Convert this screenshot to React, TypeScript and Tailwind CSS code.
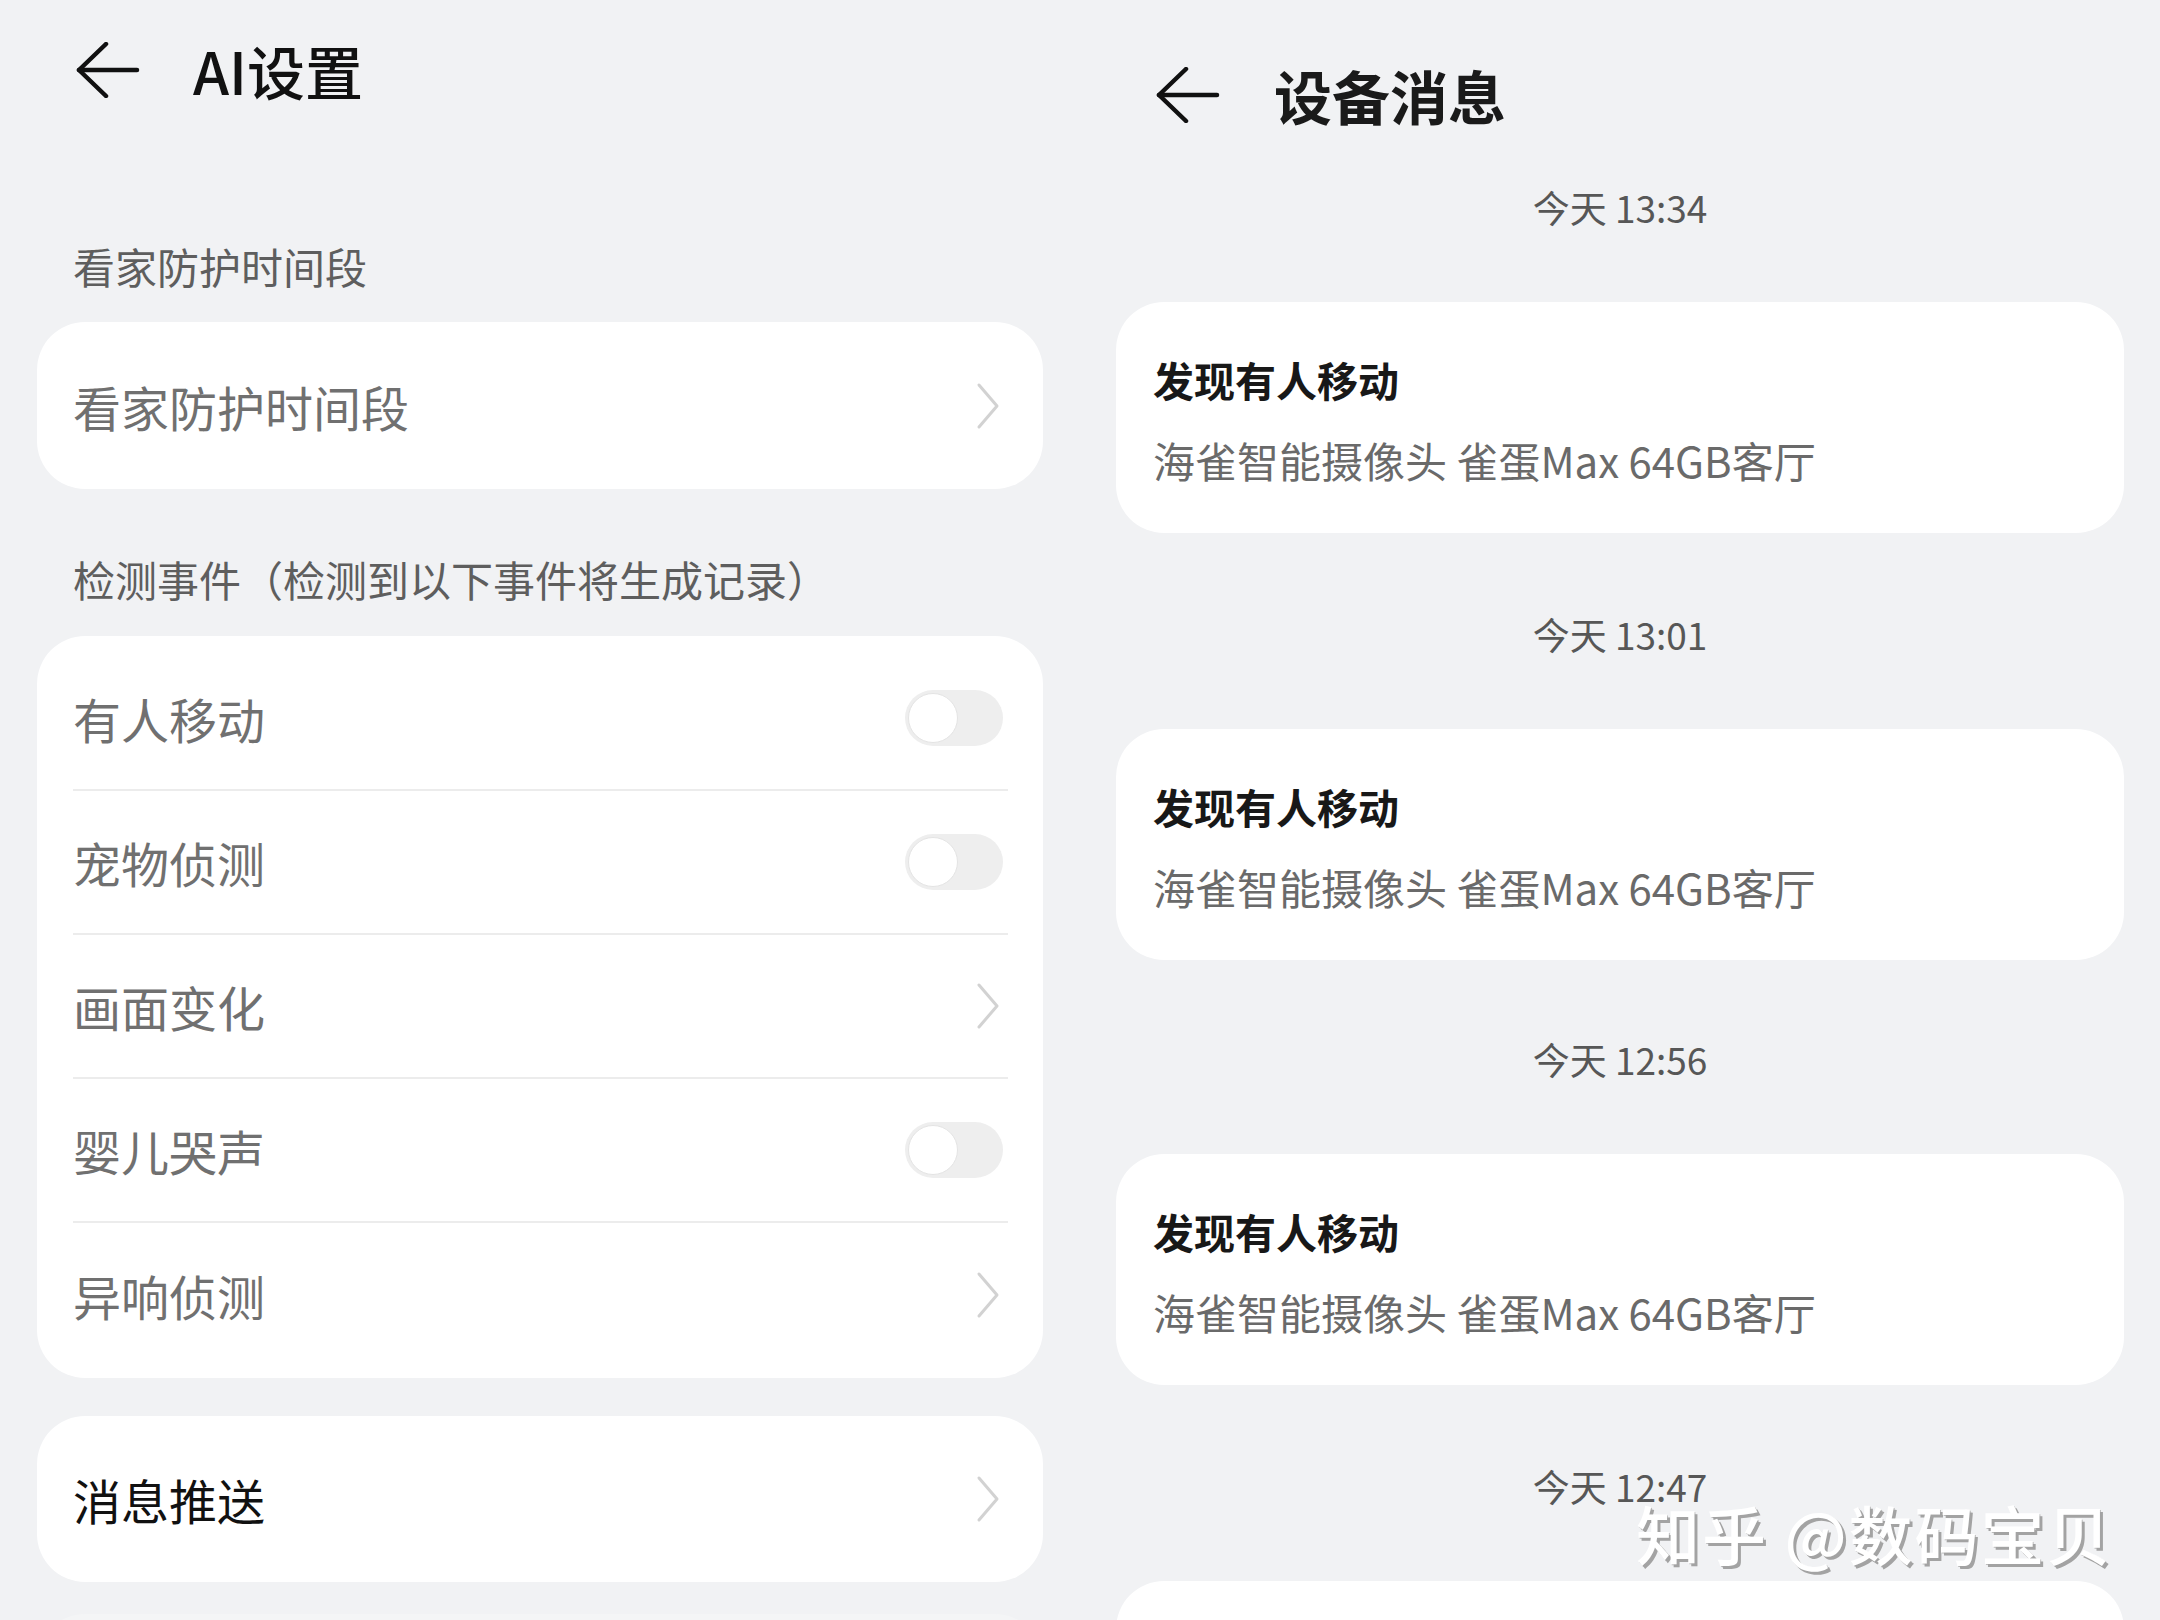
import React from "react";

const FONT = { fontFamily: '"Noto Sans CJK SC", "Noto Sans", sans-serif' };

function BackArrow() {
  return (
    <svg width="64" height="56" viewBox="0 0 64 56" fill="none">
      <path d="M30 2 L3 28 L30 54" stroke="#111" strokeWidth="4.5" strokeLinecap="round" strokeLinejoin="round" />
      <path d="M3 28 H61" stroke="#111" strokeWidth="4.5" strokeLinecap="round" />
    </svg>
  );
}

function Chevron() {
  return (
    <svg width="24" height="48" viewBox="0 0 24 48" fill="none">
      <path d="M3 3 L21 24 L3 45" stroke="#d2d2d2" strokeWidth="3" strokeLinecap="round" strokeLinejoin="round" />
    </svg>
  );
}

function Toggle() {
  return (
    <div className="w-[98px] h-[56px] rounded-full bg-[#eeeeee] flex items-center pl-[3px]">
      <div className="w-[50px] h-[50px] rounded-full bg-white border border-[#e4e4e4]" />
    </div>
  );
}

function Row({ label, kind, last }: { label: string; kind: "toggle" | "chevron"; last?: boolean }) {
  return (
    <div className={"h-[144px] shrink-0 flex items-center justify-between " + (last ? "" : "border-b-2 border-[#ececec]")}>
      <span className="text-[48px] leading-[60px] text-[#707070]">{label}</span>
      {kind === "toggle" ? (
        <div className="mr-[5px]"><Toggle /></div>
      ) : (
        <div className="mr-[8px]"><Chevron /></div>
      )}
    </div>
  );
}

function MsgCard() {
  return (
    <div className="shrink-0 mx-[36px] h-[231px] rounded-[48px] bg-white px-[37px] pt-[52px] flex flex-col gap-[31px]">
      <div className="text-[41px] leading-[50px] font-bold text-[#181818]">发现有人移动</div>
      <div className="text-[42px] leading-[50px] text-[#6a6a6a]">海雀智能摄像头 雀蛋Max 64GB客厅</div>
    </div>
  );
}

function Stamp({ t, h }: { t: string; h: string }) {
  return (
    <div className={h + " shrink-0 flex items-end justify-center pb-[73px]"}>
      <span className="text-[37px] leading-[44px] text-[#575757]">{t}</span>
    </div>
  );
}

export default function App() {
  return (
    <div className="w-[2160px] h-[1620px] bg-[#f1f2f4] flex overflow-hidden relative" style={FONT}>
      {/* Left panel */}
      <div className="w-[1080px] shrink-0 flex flex-col">
        <div className="h-[140px] shrink-0 flex items-center pl-[76px]">
          <BackArrow />
          <span className="ml-[53px] text-[58px] leading-[70px] font-medium text-[#111]">AI设置</span>
        </div>
        <div className="h-[182px] shrink-0 pl-[73px] pt-[101px] text-[42px] leading-[50px] text-[#5e5e5e]">看家防护时间段</div>
        <div className="shrink-0 mx-[37px] h-[167px] rounded-[48px] bg-white flex items-center justify-between pl-[36px] pr-[43px]">
          <span className="text-[48px] leading-[60px] text-[#707070]">看家防护时间段</span>
          <Chevron />
        </div>
        <div className="h-[147px] shrink-0 pl-[73px] pt-[65px] text-[42px] leading-[50px] text-[#5e5e5e]">检测事件（检测到以下事件将生成记录）</div>
        <div className="shrink-0 mx-[37px] rounded-[48px] bg-white pl-[36px] pr-[35px] py-[11px] flex flex-col">
          <Row label="有人移动" kind="toggle" />
          <Row label="宠物侦测" kind="toggle" />
          <Row label="画面变化" kind="chevron" />
          <Row label="婴儿哭声" kind="toggle" />
          <Row label="异响侦测" kind="chevron" last />
        </div>
        <div className="shrink-0 mt-[38px] mx-[37px] h-[166px] rounded-[48px] bg-white flex items-center justify-between pl-[36px] pr-[43px]">
          <span className="text-[48px] leading-[60px] text-[#111]">消息推送</span>
          <Chevron />
        </div>
        <div className="shrink-0 mt-[32px] mx-[37px] h-[60px] rounded-t-[48px] bg-[#f4f5f6]" />
      </div>

      {/* Right panel */}
      <div className="w-[1080px] shrink-0 flex flex-col">
        <div className="h-[130px] shrink-0 pt-[60px] flex items-center pl-[76px]">
          <BackArrow />
          <span className="ml-[54px] text-[58px] leading-[70px] font-bold text-[#1a1a1a]">设备消息</span>
        </div>
        <Stamp t="今天 13:34" h="h-[172px]" />
        <MsgCard />
        <Stamp t="今天 13:01" h="h-[196px]" />
        <MsgCard />
        <Stamp t="今天 12:56" h="h-[194px]" />
        <MsgCard />
        <Stamp t="今天 12:47" h="h-[196px]" />
        <div className="shrink-0 mx-[36px] h-[200px] rounded-t-[48px] bg-white" />
      </div>

      <div
        className="absolute left-[1636px] top-[1494px] text-[64px] leading-[76px] font-medium text-white tracking-[2px]"
        style={{ textShadow: "3px 3px 0 #a3a3a3, 1px 1px 0 #bdbdbd" }}
      >
        知乎 @数码宝贝
      </div>
    </div>
  );
}
